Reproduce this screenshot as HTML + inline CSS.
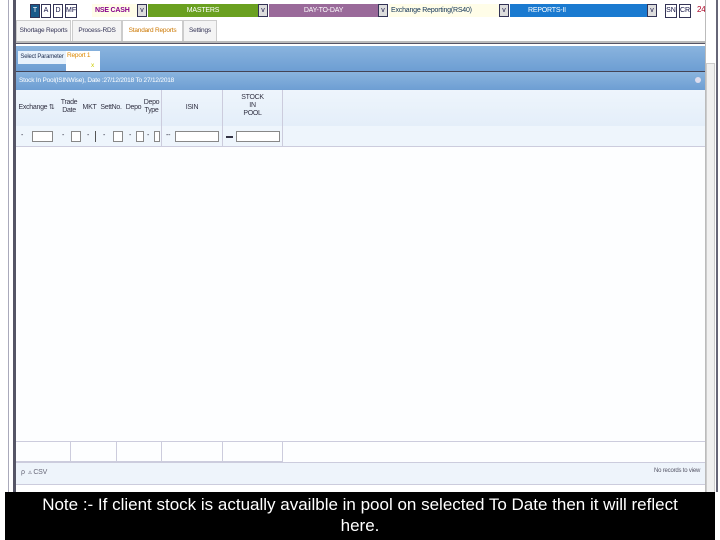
<!DOCTYPE html>
<html><head><style>
*{margin:0;padding:0;box-sizing:border-box}
body{width:720px;height:540px;background:#fff;position:relative;overflow:hidden;font-family:"Liberation Sans",sans-serif;font-size:7px;color:#223}
.a{position:absolute;white-space:nowrap;letter-spacing:-0.2px}
.bx{position:absolute;border:1px solid #335;background:#fff;font-size:7px;text-align:center;line-height:12px;color:#114;white-space:nowrap}
.inp{position:absolute;border:1px solid #888;background:#fff;height:11px}
.t{position:absolute;font-size:7px;color:#334;line-height:8px;text-align:center;white-space:nowrap;letter-spacing:-0.3px}
</style></head><body>
<div class="a" style="left:8px;top:0;width:1px;height:492px;background:#aab"></div>
<div class="a" style="left:13px;top:0;width:3px;height:492px;background:#556"></div>
<div class="bx" style="left:30px;top:4px;width:10px;height:14px;background:#1a5a8a;color:#fff">T</div>
<div class="bx" style="left:41px;top:4px;width:10px;height:14px">A</div>
<div class="bx" style="left:53px;top:4px;width:10px;height:14px">D</div>
<div class="bx" style="left:65px;top:4px;width:12px;height:14px">MF</div>
<div class="a" style="left:92px;top:4px;width:45px;height:13px;background:#fffde8;color:#808;font-size:7px;line-height:13px;padding-left:3px;font-weight:bold">NSE CASH</div>
<div class="bx" style="left:137px;top:4px;width:10px;height:13px;background:#ddd">v</div>
<div class="a" style="left:148px;top:4px;width:110px;height:13px;background:#6aa020;color:#fff;text-align:center;line-height:13px">MASTERS</div>
<div class="bx" style="left:258px;top:4px;width:10px;height:13px;background:#ddd">v</div>
<div class="a" style="left:269px;top:4px;width:109px;height:13px;background:#9a6a9a;color:#fff;text-align:center;line-height:13px">DAY-TO-DAY</div>
<div class="bx" style="left:378px;top:4px;width:10px;height:13px;background:#ddd">v</div>
<div class="a" style="left:389px;top:4px;width:110px;height:13px;background:#fffde8;color:#135;line-height:13px;padding-left:2px">Exchange Reporting(RS40)</div>
<div class="bx" style="left:499px;top:4px;width:10px;height:13px;background:#ddd">v</div>
<div class="a" style="left:510px;top:4px;width:137px;height:13px;background:#1a7ad0;color:#fff;line-height:13px;padding-left:18px">REPORTS-II</div>
<div class="bx" style="left:647px;top:4px;width:10px;height:13px;background:#ddd">v</div>
<div class="bx" style="left:665px;top:4px;width:12px;height:14px">SN</div>
<div class="bx" style="left:679px;top:4px;width:12px;height:14px">CR</div>
<div class="a" style="left:697px;top:5px;color:#a02;font-size:8px">24</div>
<div class="a" style="left:16px;top:20px;width:55px;height:22px;border:1px solid #ccc;background:#f4f4f4;line-height:20px;text-align:center;color:#335;font-size:6.5px">Shortage Reports</div>
<div class="a" style="left:72px;top:20px;width:50px;height:22px;border:1px solid #ccc;background:#f4f4f4;line-height:20px;text-align:center;color:#335;font-size:6.5px">Process-RDS</div>
<div class="a" style="left:122px;top:20px;width:61px;height:22px;border:1px solid #ccc;border-bottom:none;background:#fff;line-height:20px;text-align:center;color:#c70;font-size:6.5px">Standard Reports</div>
<div class="a" style="left:183px;top:20px;width:34px;height:22px;border:1px solid #ccc;background:#f4f4f4;line-height:20px;text-align:center;color:#335;font-size:6.5px">Settings</div>
<div class="a" style="left:16px;top:41px;width:689px;height:2px;background:#bbb"></div>
<div class="a" style="left:16px;top:43px;width:689px;height:1px;background:#556"></div>
<div class="a" style="left:16px;top:46px;width:689px;height:25px;background:linear-gradient(#8ab4de,#6d9ed3)"></div>
<div class="a" style="left:18px;top:51px;width:48px;height:13px;background:#e8f2fc;line-height:13px;text-align:center;color:#235;font-size:6px">Select Parameter</div>
<div class="a" style="left:66px;top:51px;width:34px;height:20px;background:#fff;color:#d80;padding-left:1px;line-height:10px;font-size:6.5px">Report 1<br><span style="color:#cc0;padding-left:24px">x</span></div>
<div class="a" style="left:16px;top:71px;width:689px;height:1px;background:#445"></div>
<div class="a" style="left:16px;top:72px;width:689px;height:18px;background:linear-gradient(#8ab4de,#6d9ed3);color:#fff;line-height:18px;padding-left:3px;font-size:6.5px">Stock In Pool(ISINWise), Date :27/12/2018 To 27/12/2018</div>
<div class="a" style="left:695px;top:77px;width:6px;height:6px;border-radius:3px;background:#dde"></div>
<div class="a" style="left:16px;top:90px;width:689px;height:395px;background:#fdfeff"></div>
<div class="a" style="left:16px;top:90px;width:689px;height:36px;background:linear-gradient(#eef5fc,#e4eef9)"></div>
<div class="a" style="left:16px;top:126px;width:689px;height:21px;background:#eef5fc;border-bottom:1px solid #ccd"></div>
<div class="a" style="left:16px;top:90px;width:267px;height:57px;border-right:1px solid #ccd"></div>
<div class="t" style="left:18px;top:104px;width:37px">Exchange ⇅</div>
<div class="t" style="left:57px;top:99px;width:24px">Trade<br>Date</div>
<div class="t" style="left:82px;top:104px;width:15px">MKT</div>
<div class="t" style="left:97px;top:104px;width:28px">SettNo.</div>
<div class="t" style="left:125px;top:104px;width:17px">Depo</div>
<div class="t" style="left:142px;top:99px;width:19px">Depo<br>Type</div>
<div class="a" style="left:161px;top:90px;width:1px;height:57px;background:#ccd"></div>
<div class="t" style="left:162px;top:104px;width:60px">ISIN</div>
<div class="a" style="left:222px;top:90px;width:1px;height:57px;background:#ccd"></div>
<div class="t" style="left:223px;top:94px;width:59px">STOCK<br>IN<br>POOL</div>
<div class="a" style="left:21px;top:132px">-</div><div class="inp" style="left:32px;top:131px;width:21px"></div>
<div class="a" style="left:62px;top:132px">-</div><div class="inp" style="left:71px;top:131px;width:10px"></div>
<div class="a" style="left:87px;top:132px">-</div><div class="a" style="left:95px;top:131px;width:1px;height:11px;background:#555"></div>
<div class="a" style="left:103px;top:132px">-</div><div class="inp" style="left:113px;top:131px;width:10px"></div>
<div class="a" style="left:129px;top:132px">-</div><div class="inp" style="left:136px;top:131px;width:8px"></div>
<div class="a" style="left:147px;top:132px">-</div><div class="inp" style="left:154px;top:131px;width:6px"></div>
<div class="a" style="left:166px;top:132px">--</div><div class="inp" style="left:175px;top:131px;width:44px"></div>
<div class="a" style="left:226px;top:136px;width:7px;height:2px;background:#334"></div><div class="inp" style="left:236px;top:131px;width:44px"></div>
<div class="a" style="left:16px;top:441px;width:689px;height:1px;background:#ccd"></div>
<div class="a" style="left:16px;top:441px;width:267px;height:21px;border-right:1px solid #ccd;border-bottom:1px solid #ccd"></div>
<div class="a" style="left:70px;top:441px;width:1px;height:21px;background:#ccd"></div>
<div class="a" style="left:116px;top:441px;width:1px;height:21px;background:#ccd"></div>
<div class="a" style="left:161px;top:441px;width:1px;height:21px;background:#ccd"></div>
<div class="a" style="left:222px;top:441px;width:1px;height:21px;background:#ccd"></div>
<div class="a" style="left:16px;top:462px;width:689px;height:23px;background:#eef4fb;border-top:1px solid #ccd;border-bottom:1px solid #ccd"></div>
<div class="a" style="left:21px;top:468px;color:#667">ρ &nbsp;▵ CSV</div>
<div class="a" style="left:654px;top:468px;color:#556;font-size:6px">No records to view</div>
<div class="a" style="left:705px;top:0;width:1px;height:492px;background:#bbb"></div>
<div class="a" style="left:706px;top:63px;width:9px;height:430px;background:#f0f0f0;border:1px solid #ccc"></div>
<div class="a" style="left:716px;top:0;width:2px;height:492px;background:#667"></div>
<div style="position:absolute;left:5px;top:492px;width:710px;height:48px;background:#000;color:#fff;font-size:17px;line-height:21px;text-align:center;padding-top:2px;white-space:nowrap">Note :- If client stock is actually availble in pool on selected To Date then it will reflect<br>here.</div>
</body></html>
